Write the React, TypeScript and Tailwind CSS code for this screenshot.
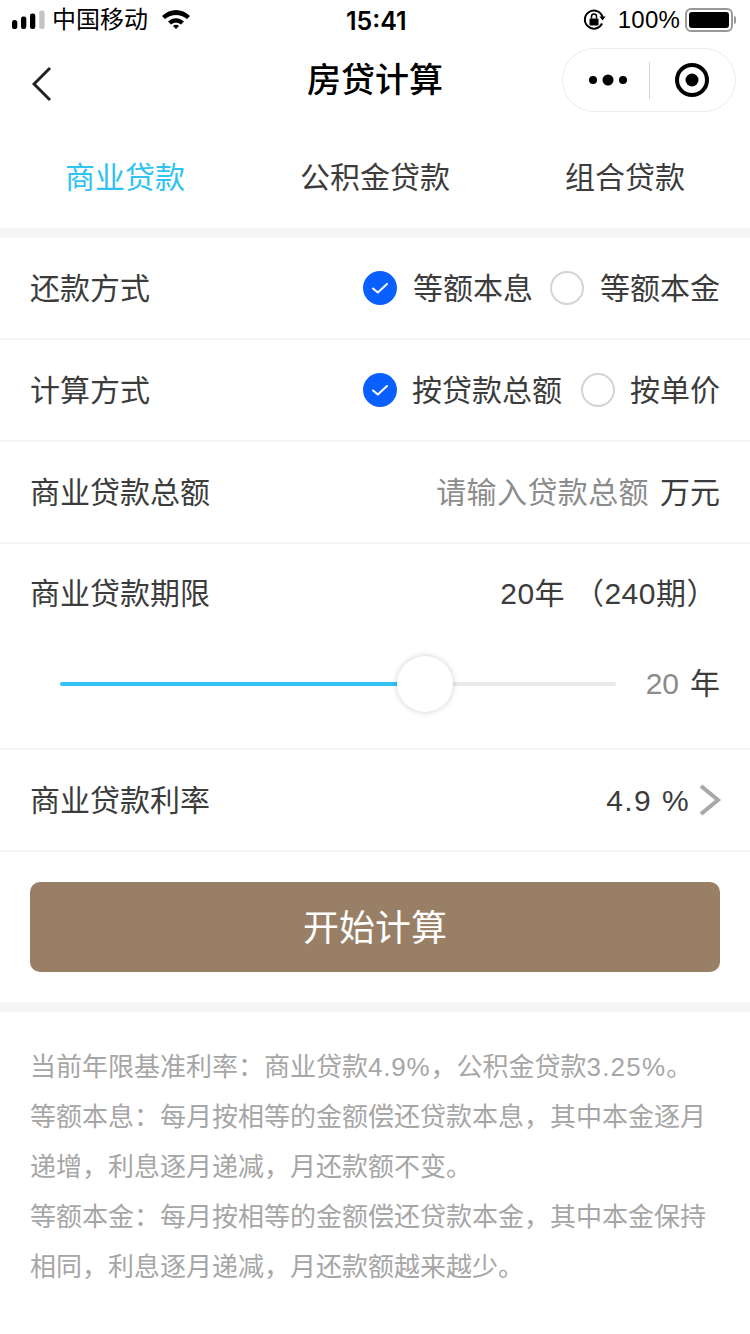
function Radio({ on }: { on?: boolean }) {
  if (on)
    return (
      <span className="w-[34px] h-[34px] rounded-full bg-[#0a60ff] flex items-center justify-center shrink-0">
        <svg width="18" height="14" viewBox="0 0 18 14" fill="none">
          <path d="M2 7.5 L6.8 11.5 L16 3" stroke="#fff" strokeWidth="2" strokeLinecap="round" strokeLinejoin="round" />
        </svg>
      </span>
    );
  return <span className="w-[34px] h-[34px] rounded-full bg-white border-2 border-[#d4d4d4] shrink-0" />;
}

function Row({ children, h }: { children: React.ReactNode; h: string }) {
  return <div className={`flex items-center justify-between px-[30px] border-b-2 border-[#f5f5f5] ${h}`}>{children}</div>;
}

export default function App() {
  return (
    <div className="w-[750px] h-[1334px] bg-white overflow-hidden text-[#3c3c3c] font-['Liberation_Sans','Noto_Sans_CJK_SC',sans-serif]">
      <div className="h-[40px] flex items-center justify-between pl-[12px] pr-[14px] text-black relative">
        <div className="flex items-center gap-[6px]">
          <svg width="34" height="20" viewBox="0 0 34 20">
            <rect x="0" y="10" width="5.300" height="9" rx="2.600" fill="#000" />
            <rect x="9" y="6.500" width="5.300" height="12.500" rx="2.200" fill="#000" />
            <rect x="18" y="3.500" width="5.300" height="15.500" rx="2.200" fill="#000" />
            <rect x="27.300" y="0.500" width="5.300" height="18.500" rx="2.200" fill="#c4c4c4" />
          </svg>
          <span className="text-[24px] leading-none">中国移动</span>
          <svg width="28" height="20" viewBox="0 0 28 20" className="ml-[8px] -mt-[2px]">
            <path d="M0 7 C8 -1 20 -1 28 7 L25 10 C18 4.500 10 4.500 3 10 Z" fill="#000" />
            <path d="M6 12.500 C11 8 17 8 22 12.500 L19 15.500 C16 13 12 13 9 15.500 Z" fill="#000" />
            <path d="M11 17 C13 15.300 15 15.300 17 17 L14 20 Z" fill="#000" />
          </svg>
        </div>
        <span className="absolute left-[346px] top-[7px] text-[25px] leading-[28px] font-semibold font-['Inter',sans-serif]">15:41</span>
        <div className="flex items-center">
          <svg width="24" height="24" viewBox="0 0 24 24" fill="none" className="mr-[12px]">
            <path d="M20 15.500 A9 9 0 1 1 20.500 9" stroke="#000" strokeWidth="2" />
            <path d="M17.500 8.500 L23.500 8.500 L20.500 12.500 Z" fill="#000" />
            <rect x="7.500" y="10.500" width="9" height="7" rx="1" fill="#000" />
            <path d="M9.500 10.500 V8.500 A2.500 2.500 0 0 1 14.500 8.500 V10.500" stroke="#000" strokeWidth="1.500" />
          </svg>
          <span className="text-[24px] leading-none mr-[5px] tracking-[0.2px]">100%</span>
          <span className="w-[48px] h-[24px] rounded-[6px] border-2 border-[#999] p-[2px] flex">
            <span className="flex-1 bg-black rounded-[3px]" />
          </span>
          <span className="w-[2px] h-[8px] bg-[#999] rounded-r-full ml-[1px]" />
        </div>
      </div>

      <div className="h-[88px] relative flex items-center justify-center">
        <svg width="22" height="36" viewBox="0 0 22 36" fill="none" className="absolute left-[32px] top-[26px]">
          <path d="M18 2 L2 18 L18 34" stroke="#222" strokeWidth="3" />
        </svg>
        <span className="text-[34px] font-medium text-black leading-none -mt-[8px]">房贷计算</span>
        <div className="absolute left-[562px] top-[8px] w-[174px] h-[64px] rounded-full border border-[#ececec] flex items-center">
          <svg width="38" height="14" viewBox="0 0 38 14" className="ml-[26px]">
            <circle cx="4" cy="7" r="4" fill="#000" />
            <circle cx="19" cy="7" r="5.500" fill="#000" />
            <circle cx="34" cy="7" r="4" fill="#000" />
          </svg>
          <span className="w-px h-[37px] bg-[#d4d4d4] ml-[22px]" />
          <svg width="34" height="34" viewBox="0 0 34 34" fill="none" className="ml-[25px]">
            <circle cx="17" cy="17" r="15" stroke="#000" strokeWidth="4" />
            <circle cx="17" cy="17" r="6.500" fill="#000" />
          </svg>
        </div>
      </div>

      <div className="h-[110px] grid grid-cols-3 text-center text-[30px] items-center pb-[2px] border-b-[10px] border-[#f5f5f5]">
        <span className="text-[#30c2f2]">商业贷款</span>
        <span>公积金贷款</span>
        <span>组合贷款</span>
      </div>

      <Row h="h-[102px]">
        <span className="text-[30px]">还款方式</span>
        <div className="flex items-center text-[30px]">
          <Radio on />
          <span className="ml-[16px]">等额本息</span>
          <span className="ml-[17px] flex"><Radio /></span>
          <span className="ml-[16px]">等额本金</span>
        </div>
      </Row>
      <Row h="h-[102px]">
        <span className="text-[30px]">计算方式</span>
        <div className="flex items-center text-[30px]">
          <Radio on />
          <span className="ml-[15px]">按贷款总额</span>
          <span className="ml-[19px] flex"><Radio /></span>
          <span className="ml-[15px]">按单价</span>
        </div>
      </Row>
      <Row h="h-[102px]">
        <span className="text-[30px]">商业贷款总额</span>
        <div className="flex items-center text-[30px]">
          <span className="text-[#8c8c8c] tracking-[0.4px]">请输入贷款总额</span>
          <span className="ml-[11px]">万元</span>
        </div>
      </Row>

      <div className="h-[206px] px-[30px] border-b-2 border-[#f5f5f5]">
        <div className="flex items-center justify-between h-[99px] text-[30px]">
          <span>商业贷款期限</span>
          <span className="mr-[3px] tracking-[0.5px]">20年 （240期）</span>
        </div>
        <div className="flex items-center h-[80px] mt-[1px]">
          <div className="relative ml-[30px] w-[557px] h-[4px] rounded-full bg-[#e9e9e9]">
            <div className="h-full w-[340px] rounded-l-full bg-[#30c2f2]" />
            <div className="absolute left-[337px] -top-[26px] w-[56px] h-[56px] rounded-full bg-white shadow-[0_0_6px_rgba(0,0,0,0.2)]" />
          </div>
          <span className="ml-[30px] text-[30px] text-[#8c8c8c] leading-none">20</span>
          <span className="ml-[11px] text-[30px] leading-none">年</span>
        </div>
      </div>

      <Row h="h-[102px]">
        <span className="text-[30px]">商业贷款利率</span>
        <div className="flex items-center text-[30px] -mr-[2px]">
          <span className="tracking-[1.4px]">4.9 %</span>
          <svg width="24" height="32" viewBox="0 0 24 32" fill="none" className="ml-[8px]">
            <path d="M3 2 L20 16 L3 30" stroke="#a8a8a8" strokeWidth="4" />
          </svg>
        </div>
      </Row>

      <div className="h-[160px] px-[30px] pt-[30px] border-b-[10px] border-[#f5f5f5]">
        <button className="w-full h-[90px] pt-[3px] rounded-[10px] bg-[#987f66] text-white text-[36px]">开始计算</button>
      </div>

      <div className="px-[30px] pt-[30px] text-[26px] leading-[50px] text-[#a6a6a6]">
        <p>
          当前年限基准利率：商业贷款<span className="tracking-[0.8px]">4.9%</span>，公积金贷款<span className="tracking-[1.2px]">3.25%</span>。
        </p>
        <p>等额本息：每月按相等的金额偿还贷款本息，其中本金逐月递增，利息逐月递减，月还款额不变。</p>
        <p>等额本金：每月按相等的金额偿还贷款本金，其中本金保持相同，利息逐月递减，月还款额越来越少。</p>
      </div>
    </div>
  );
}
